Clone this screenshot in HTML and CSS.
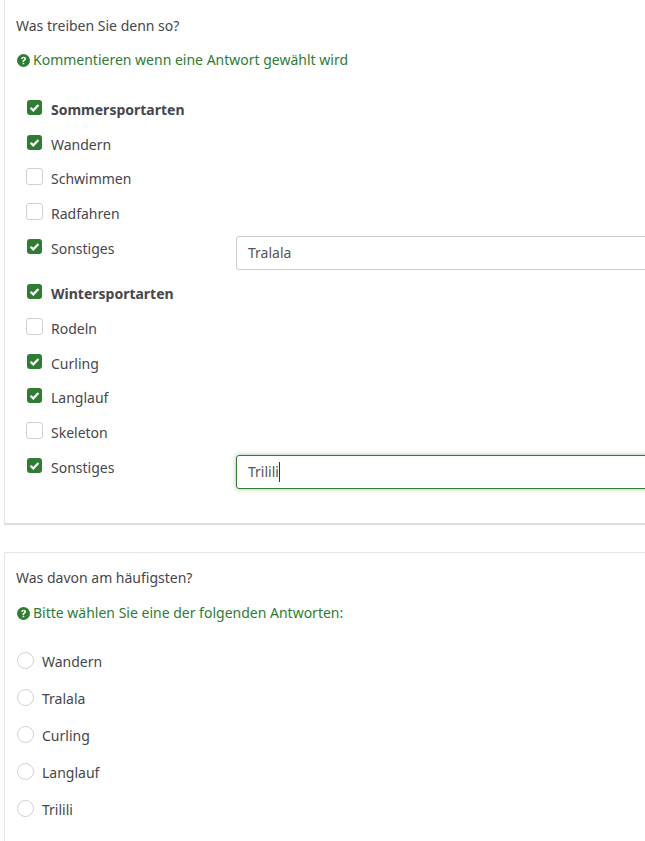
FILE: index.html
```html
<!DOCTYPE html>
<html lang="de">
<head>
<meta charset="utf-8">
<title>Umfrage</title>
<link rel="stylesheet" href="styles.css">
</head>
<body>
<svg class="defs" width="0" height="0" aria-hidden="true">
  <symbol id="help" viewBox="0 0 24 24"><circle cx="12" cy="12" r="12" fill="#2e7d32"/><path d="M7.800 9.200c.2-2.600 2-4.200 4.500-4.200 2.600 0 4.400 1.500 4.400 3.700 0 1.800-1 2.600-2.200 3.400-1 .7-1.400 1.100-1.400 2.200v.4h-2.900v-.8c0-1.800.8-2.700 2-3.500 1-.7 1.500-1.100 1.500-1.900 0-.9-.7-1.400-1.600-1.400-1 0-1.600.7-1.700 2z" fill="#fff"/><rect x="10.300" y="16" width="3" height="3" rx=".4" fill="#fff"/></symbol>
  <symbol id="check" viewBox="0 0 16 16"><path d="M3.800 8.200l2.900 2.800 5.500-5.600" fill="none" stroke="#fff" stroke-width="2.400"/></symbol>
</svg>
<section class="card first">
  <p class="question">Was treiben Sie denn so?</p>
  <p class="hint"><svg class="help"><use href="#help"/></svg>Kommentieren wenn eine Antwort gewählt wird</p>
  <div class="checks">
    <label class="row"><span class="box on"><svg><use href="#check"/></svg></span><b>Sommersportarten</b></label>
    <label class="row"><span class="box on"><svg><use href="#check"/></svg></span>Wandern</label>
    <label class="row"><span class="box"></span>Schwimmen</label>
    <label class="row"><span class="box"></span>Radfahren</label>
    <div class="row other"><span class="box on"><svg><use href="#check"/></svg></span><span class="other-label">Sonstiges</span><div class="field">Tralala</div></div>
    <label class="row"><span class="box on"><svg><use href="#check"/></svg></span><b>Wintersportarten</b></label>
    <label class="row"><span class="box"></span>Rodeln</label>
    <label class="row"><span class="box on"><svg><use href="#check"/></svg></span>Curling</label>
    <label class="row"><span class="box on"><svg><use href="#check"/></svg></span>Langlauf</label>
    <label class="row"><span class="box"></span>Skeleton</label>
    <div class="row other"><span class="box on"><svg><use href="#check"/></svg></span><span class="other-label">Sonstiges</span><div class="field focus">Trilili<span class="caret"></span></div></div>
  </div>
</section>
<section class="card second">
  <p class="question">Was davon am häufigsten?</p>
  <p class="hint"><svg class="help"><use href="#help"/></svg>Bitte wählen Sie eine der folgenden Antworten:</p>
  <div class="radios">
    <label class="radio"><span class="dot"></span>Wandern</label>
    <label class="radio"><span class="dot"></span>Tralala</label>
    <label class="radio"><span class="dot"></span>Curling</label>
    <label class="radio"><span class="dot"></span>Langlauf</label>
    <label class="radio"><span class="dot"></span>Trilili</label>
  </div>
</section>
</body>
</html>
```
FILE: styles.css
```css
html, body { margin: 0; height: 841px; overflow: hidden; background: #fff; }
body { padding-left: 4px; font: 14px/20px "Noto Sans", sans-serif; color: #46464d; box-sizing: border-box; }
.defs { position: absolute; }
.card { width: 800px; box-sizing: border-box; background: #fff; border: 1px solid #e6e6e6; padding: 0 11px; }
.first { height: 526px; margin-top: -1px; padding-top: 16px; border-bottom: 2px solid #dedede; box-shadow: 0 0 2px rgba(0,0,0,.06); }
.second { margin-top: 27px; height: 400px; padding-top: 15px; }
.question { margin: 0; }
.hint { margin: 14px 0 0; color: #2e7d32; display: flex; align-items: center; gap: 3px; padding-left: 1px; }
.second .hint { margin-top: 15px; }
.help { width: 13px; height: 13px; flex: none; }
.checks { margin-top: 22.6px; padding-left: 10px; }
.row { display: flex; align-items: center; height: 34.7px; }
.box { width: 17px; height: 17px; box-sizing: border-box; flex: none; margin: -5px 8px 0 0; border: 1px solid #d0d0d0; border-radius: 3px; background: #fff; }
.box.on { width: 15px; height: 15px; margin-left: 1px; margin-right: 9px; border: 0; background: #2e7d32; }
.box.on svg { display: block; width: 15px; height: 15px; }
.other { height: 45.7px; align-items: flex-start; }
.other .box { margin-top: 7.7px; }
.other-label { width: 185px; flex: none; margin-top: 7.7px; }
.field { width: 560px; height: 34px; box-sizing: border-box; border: 1px solid #ccc; border-radius: 3px; padding: 6px 11px; margin-top: 4.6px; color: #555; flex: none; }
.field.focus { border-color: #2e7d32; box-shadow: 0 0 5px rgba(46,125,50,.45); }
.caret { display: inline-block; width: 1px; height: 20px; background: #333; vertical-align: top; }
.radios { margin-top: 21px; }
.radio { display: flex; align-items: center; height: 36.8px; }
.dot { width: 17px; height: 17px; box-sizing: border-box; flex: none; margin: -3px 8px 0 1px; border: 1px solid #d0d0d0; border-radius: 50%; background: #fff; }
```
